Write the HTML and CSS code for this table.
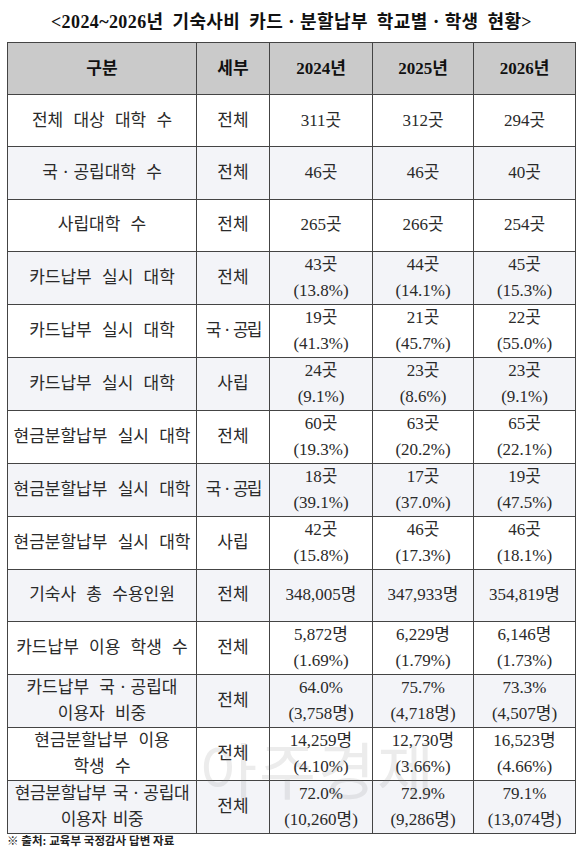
FILE: index.html
```html
<!DOCTYPE html>
<html lang="ko">
<head>
  <meta charset="UTF-8">
  <title>2024~2026년 기숙사비 카드ㆍ분할납부 학교별ㆍ학생 현황</title>
  <link rel="stylesheet" href="styles.css">
</head>
<body>
  <div class="page">
    <h1 class="title">&lt;2024~2026년 기숙사비 카드ㆍ분할납부 학교별ㆍ학생 현황&gt;</h1>

    <table class="stat">
      <colgroup>
        <col class="c-name">
        <col class="c-sub">
        <col class="c-y1">
        <col class="c-y2">
        <col class="c-y3">
      </colgroup>
      <thead>
        <tr>
          <th>구분</th>
          <th>세부</th>
          <th>2024년</th>
          <th>2025년</th>
          <th>2026년</th>
        </tr>
      </thead>
      <tbody>
        <tr>
          <td>전체 대상 대학 수</td>
          <td>전체</td>
          <td>311곳</td>
          <td>312곳</td>
          <td>294곳</td>
        </tr>
        <tr>
          <td>국ㆍ공립대학 수</td>
          <td>전체</td>
          <td>46곳</td>
          <td>46곳</td>
          <td>40곳</td>
        </tr>
        <tr>
          <td>사립대학 수</td>
          <td>전체</td>
          <td>265곳</td>
          <td>266곳</td>
          <td>254곳</td>
        </tr>
        <tr>
          <td>카드납부 실시 대학</td>
          <td>전체</td>
          <td>43곳<br>(13.8%)</td>
          <td>44곳<br>(14.1%)</td>
          <td>45곳<br>(15.3%)</td>
        </tr>
        <tr>
          <td>카드납부 실시 대학</td>
          <td class="tight">국ㆍ공립</td>
          <td>19곳<br>(41.3%)</td>
          <td>21곳<br>(45.7%)</td>
          <td>22곳<br>(55.0%)</td>
        </tr>
        <tr>
          <td>카드납부 실시 대학</td>
          <td>사립</td>
          <td>24곳<br>(9.1%)</td>
          <td>23곳<br>(8.6%)</td>
          <td>23곳<br>(9.1%)</td>
        </tr>
        <tr>
          <td>현금분할납부 실시 대학</td>
          <td>전체</td>
          <td>60곳<br>(19.3%)</td>
          <td>63곳<br>(20.2%)</td>
          <td>65곳<br>(22.1%)</td>
        </tr>
        <tr>
          <td>현금분할납부 실시 대학</td>
          <td class="tight">국ㆍ공립</td>
          <td>18곳<br>(39.1%)</td>
          <td>17곳<br>(37.0%)</td>
          <td>19곳<br>(47.5%)</td>
        </tr>
        <tr>
          <td>현금분할납부 실시 대학</td>
          <td>사립</td>
          <td>42곳<br>(15.8%)</td>
          <td>46곳<br>(17.3%)</td>
          <td>46곳<br>(18.1%)</td>
        </tr>
        <tr>
          <td>기숙사 총 수용인원</td>
          <td>전체</td>
          <td>348,005명</td>
          <td>347,933명</td>
          <td>354,819명</td>
        </tr>
        <tr>
          <td>카드납부 이용 학생 수</td>
          <td>전체</td>
          <td>5,872명<br>(1.69%)</td>
          <td>6,229명<br>(1.79%)</td>
          <td>6,146명<br>(1.73%)</td>
        </tr>
        <tr>
          <td>카드납부 국ㆍ공립대<br>이용자 비중</td>
          <td>전체</td>
          <td>64.0%<br>(3,758명)</td>
          <td>75.7%<br>(4,718명)</td>
          <td>73.3%<br>(4,507명)</td>
        </tr>
        <tr>
          <td>현금분할납부 이용<br>학생 수</td>
          <td>전체</td>
          <td>14,259명<br>(4.10%)</td>
          <td>12,730명<br>(3.66%)</td>
          <td>16,523명<br>(4.66%)</td>
        </tr>
        <tr>
          <td class="narrow">현금분할납부 국ㆍ공립대<br>이용자 비중</td>
          <td>전체</td>
          <td>72.0%<br>(10,260명)</td>
          <td>72.9%<br>(9,286명)</td>
          <td>79.1%<br>(13,074명)</td>
        </tr>
      </tbody>
    </table>

    <p class="source">※ 출처: 교육부 국정감사 답변 자료</p>
  </div>
</body>
</html>
```

FILE: styles.css
```css
* { box-sizing: border-box; }

body {
  margin: 0;
  background: #fff;
  color: #222;
  font-family: "Liberation Serif", "Noto Sans CJK KR", serif;
}

.page { position: relative; width: 583px; height: 847px; overflow: hidden; }

.title {
  margin: 0;
  height: 42px;
  padding-top: 10px;
  text-align: center;
  font-size: 18px;
  line-height: 24px;
  font-weight: bold;
  letter-spacing: 0.4px;
  word-spacing: 4px;
  color: #111;
}

/* 표 */
.stat {
  margin-left: 7px;
  width: 568px;
  table-layout: fixed;
  border-collapse: collapse;
  border: 1px solid #555;
}
.c-name { width: 189px; }
.c-sub { width: 73px; }
.c-y1 { width: 103px; }
.c-y2 { width: 101px; }
.c-y3 { width: 102px; }

.stat th, .stat td {
  border: 1px solid #444;
  padding: 0;
  text-align: center;
  vertical-align: middle;
  font-size: 17px;
  line-height: 26px;
  height: 52.2px;
}
.stat th {
  background: #cacaca;
  font-weight: bold;
  color: #111;
}
.stat td { color: #2a2a2a; word-spacing: 6px; }
.stat tbody tr:nth-child(even) td { background: #f3f4f8; }
.stat td.tight { letter-spacing: -2px; word-spacing: 0; }
.stat td.narrow { word-spacing: 2px; letter-spacing: -0.3px; }

.source {
  margin: 0;
  padding: 1px 0 0 7px;
  font-size: 11.5px;
  line-height: 12px;
  font-weight: bold;
  color: #222;
}

/* 워터마크 */
.page::after {
  content: "아주경제";
  position: absolute;
  left: 200px;
  top: 728px;
  font-family: "Noto Sans CJK KR", sans-serif;
  font-size: 62px;
  line-height: 80px;
  letter-spacing: 2px;
  color: rgba(120, 120, 120, 0.14);
  pointer-events: none;
}
```
